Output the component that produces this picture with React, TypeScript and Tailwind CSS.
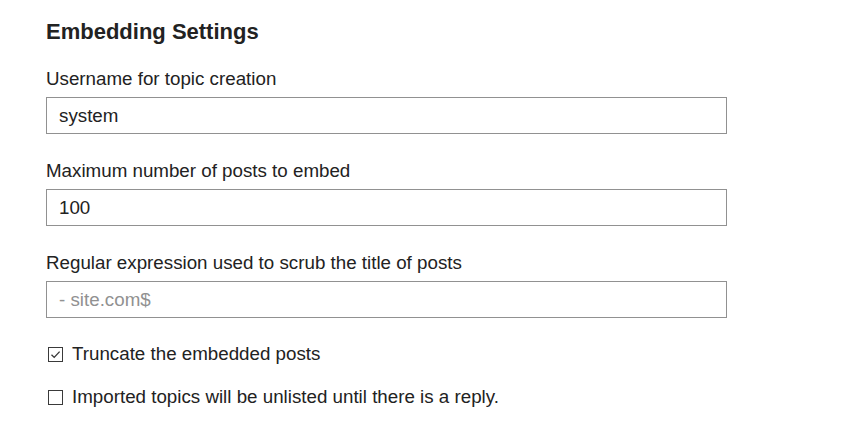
import React from "react"

const font = { fontFamily: '"Liberation Sans", Arial, sans-serif' }

const Field = ({ label, value, placeholder }: { label: string; value?: string; placeholder?: string }) => (
  <div className="flex flex-col">
    <label className="text-[18.75px] leading-[22px] text-[#222222]">{label}</label>
    <input
      readOnly
      value={value ?? ""}
      placeholder={placeholder}
      className="mt-[7px] w-[681px] h-[37px] border border-[#919191] bg-white px-[12px] text-[18.75px] text-[#222222] placeholder:text-[#919191] outline-none"
    />
  </div>
)

const Check = ({ label, checked }: { label: string; checked?: boolean }) => (
  <div className="flex items-center h-[22px]">
    <span className="ml-[2px] w-[15px] h-[15px] border border-[#3a3a3a] bg-white flex items-center justify-center">
      {checked && (
        <svg width="11" height="11" viewBox="0 0 11 11" fill="none">
          <path d="M1.5 5.8 L4.2 8.4 L9.6 2.6" stroke="#333" strokeWidth="1.3" />
        </svg>
      )}
    </span>
    <span className="ml-[9px] text-[18.75px] leading-[22px] text-[#222222]">{label}</span>
  </div>
)

export default function App() {
  return (
    <div className="w-[848px] h-[434px] bg-white pl-[46px] pt-[19px]" style={font}>
      <h2 className="text-[22px] leading-[26px] font-bold text-[#222222]">Embedding Settings</h2>
      <div className="mt-[23px]">
        <Field label="Username for topic creation" value="system" />
      </div>
      <div className="mt-[26px]">
        <Field label="Maximum number of posts to embed" value="100" />
      </div>
      <div className="mt-[26px]">
        <Field label="Regular expression used to scrub the title of posts" placeholder="- site.com$" />
      </div>
      <div className="mt-[25px]">
        <Check label="Truncate the embedded posts" checked />
      </div>
      <div className="mt-[21px]">
        <Check label="Imported topics will be unlisted until there is a reply." />
      </div>
    </div>
  )
}
